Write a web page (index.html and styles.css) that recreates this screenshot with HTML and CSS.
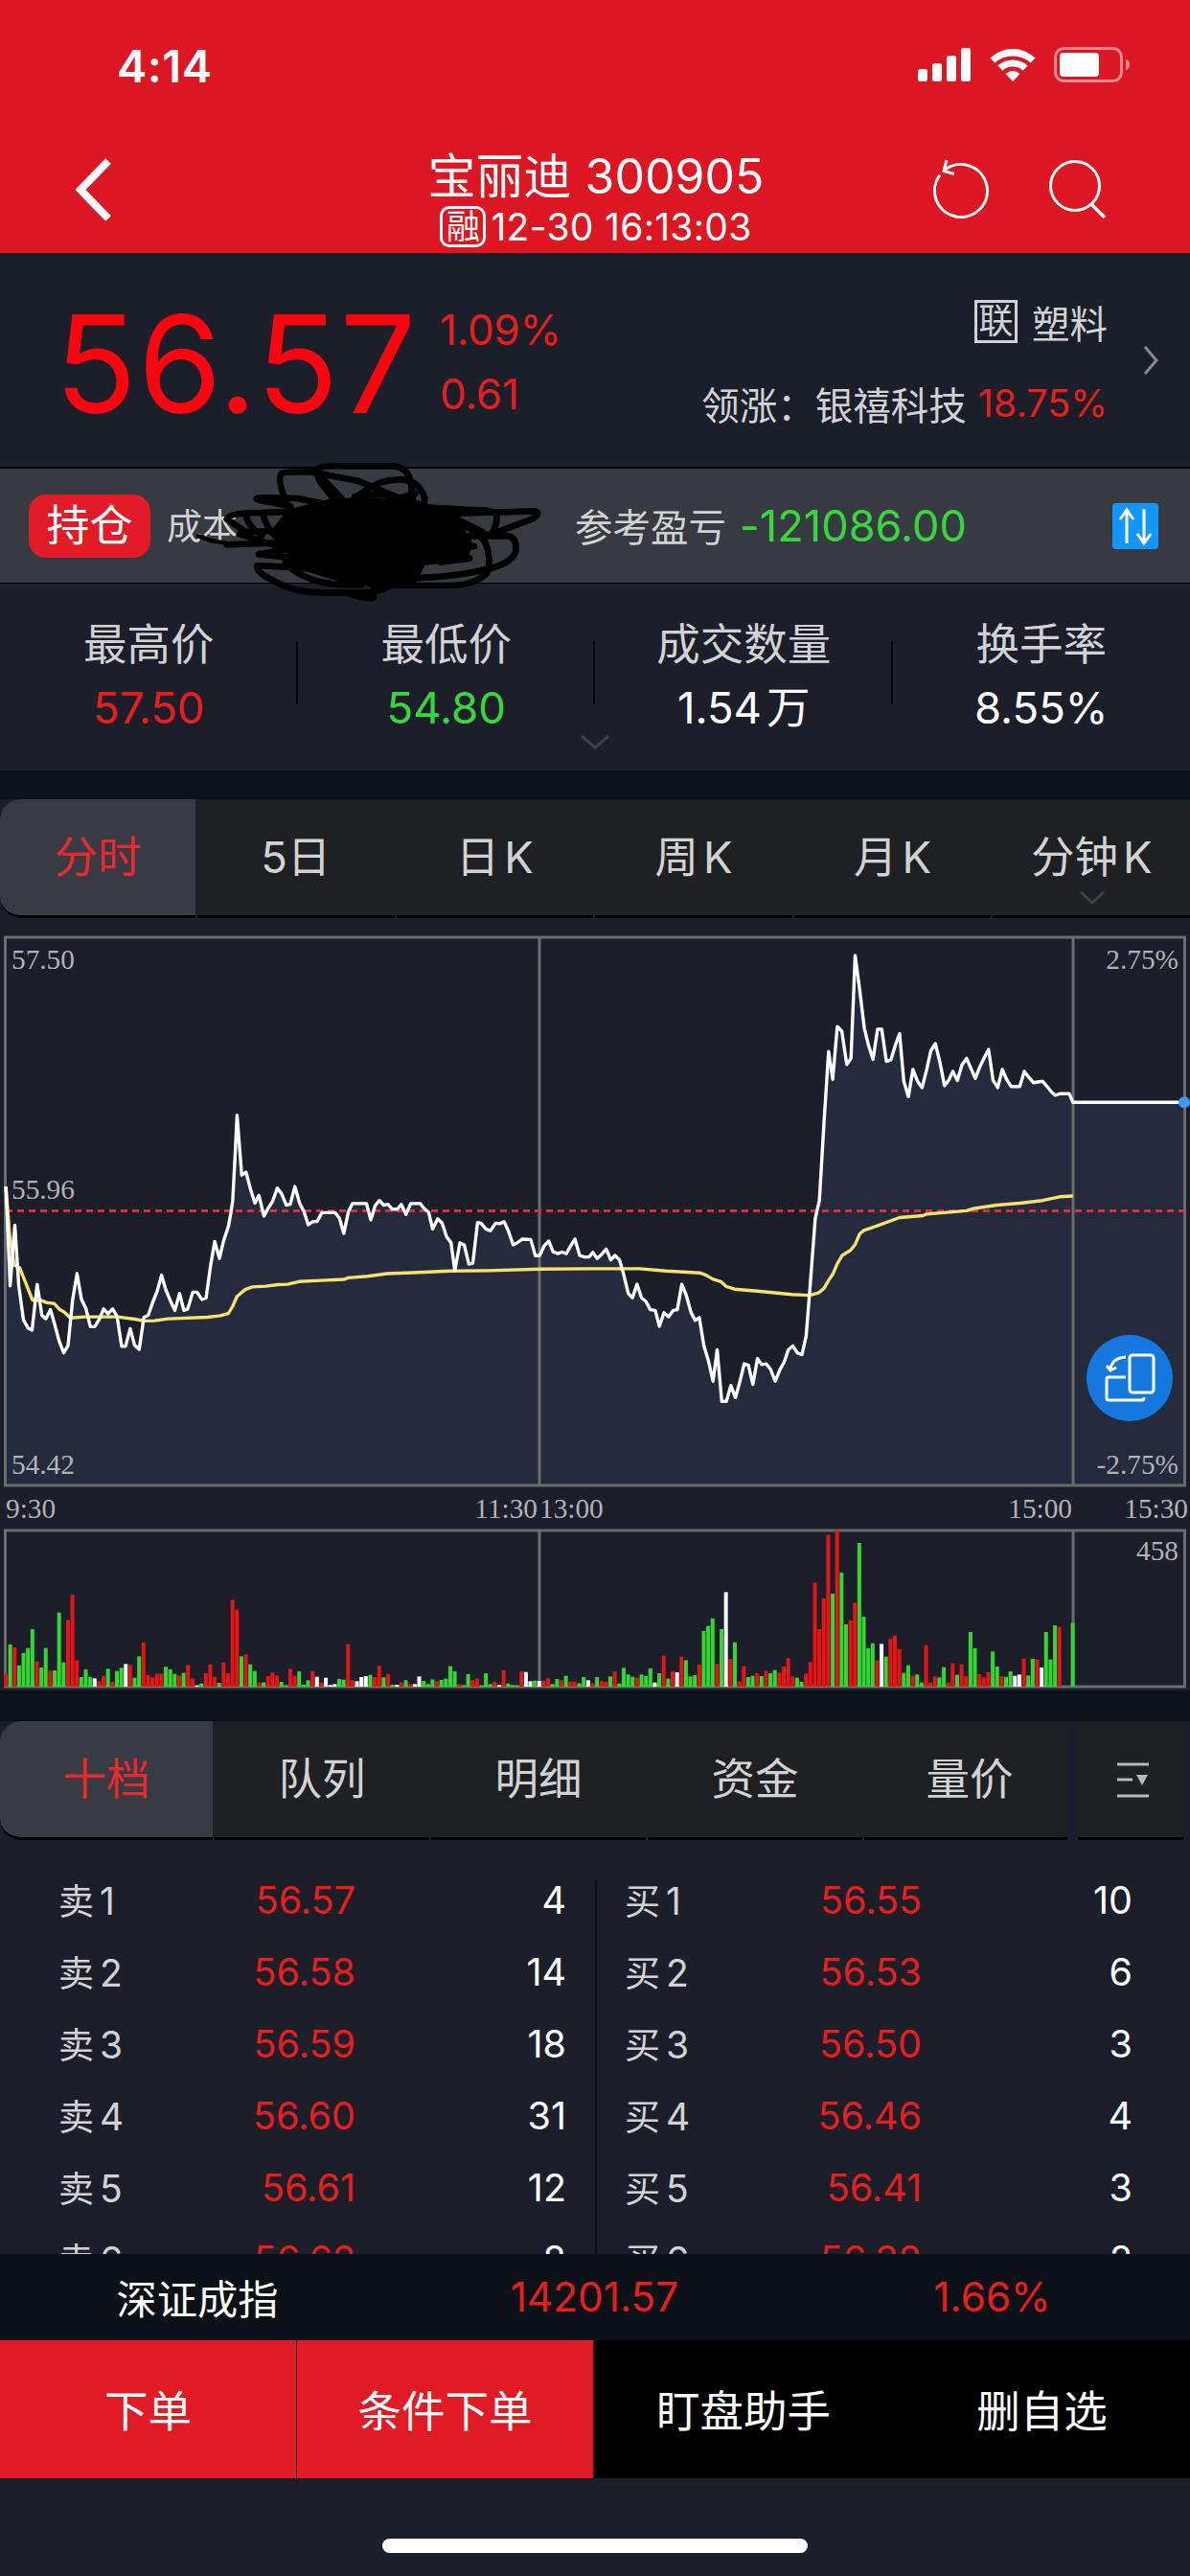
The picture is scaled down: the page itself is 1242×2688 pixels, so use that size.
FILE: index.html
```html
<!DOCTYPE html>
<html lang="zh-CN">
<head>
    <meta charset="UTF-8">
    <meta name="viewport" content="width=device-width, initial-scale=1.0">
    <title>宝丽迪 300905</title>
    <link rel="stylesheet" href="styles.css">
</head>
<body>
    <header class="header">
        <div class="status-bar">
            <span class="clock">4:14</span>
            <div class="status-icons">
                <svg width="56" height="36" viewBox="0 0 56 36" fill="#fff">
                    <rect x="0" y="22" width="10" height="13" rx="2.5"/>
                    <rect x="15" y="16" width="10" height="19" rx="2.5"/>
                    <rect x="30" y="8" width="10" height="27" rx="2.5"/>
                    <rect x="45" y="0" width="10" height="35" rx="2.5"/>
                </svg>
                <svg class="wifi" width="48" height="36" viewBox="0 0 48 36" fill="#fff">
                    <path d="M0.5 10.5 A34 34 0 0 1 47.5 10.5 L42.5 15.8 A27 27 0 0 0 5.5 15.8 Z"/>
                    <path d="M8.3 18.6 A23 23 0 0 1 39.7 18.6 L34.6 23.8 A15.5 15.5 0 0 0 13.4 23.8 Z"/>
                    <path d="M16.5 27 A11 11 0 0 1 31.5 27 L24 35 Z"/>
                </svg>
                <svg width="80" height="38" viewBox="0 0 80 38">
                    <rect x="1.5" y="1.5" width="69" height="34" rx="9" fill="none" stroke="#f48a90" stroke-width="3"/>
                    <rect x="6" y="6" width="41" height="25" rx="4" fill="#fff"/>
                    <path d="M75 12.5 Q79 14.5 79 18.5 Q79 22.5 75 24.5 Z" fill="#f48a90"/>
                </svg>
            </div>
        </div>
        <nav class="nav">
            <svg class="back" width="40" height="66" viewBox="0 0 40 66" fill="none" stroke="#fff" stroke-width="8">
                <path d="M35 3 L6 33 L35 63"/>
            </svg>
            <div class="title">
                <h1>宝丽迪 300905</h1>
                <p><span class="badge">融</span>12-30 16:13:03</p>
            </div>
            <div class="actions">
                <svg width="60" height="64" viewBox="0 0 60 64" fill="none" stroke="#fff" stroke-width="3">
                    <path d="M11 10.4 A27.5 27.5 0 1 1 6 15.5"/>
                    <path d="M13 0 L10 11.5 L21 14.5"/>
                </svg>
                <svg width="60" height="64" viewBox="0 0 60 64" fill="none" stroke="#fff" stroke-width="3">
                    <circle cx="27" cy="27" r="25.5"/>
                    <path d="M44 46 L58 60" stroke-width="3.5"/>
                </svg>
            </div>
        </nav>
    </header>

    <section class="quote">
        <div class="price">56.57</div>
        <div class="change">
            <span>1.09%</span>
            <span>0.61</span>
        </div>
        <div class="sector">
            <div><span class="box">联</span>塑料</div>
            <div>领涨：银禧科技<span class="leader">18.75%</span></div>
        </div>
        <svg class="more" width="17" height="32" viewBox="0 0 17 32" fill="none" stroke="#85888e" stroke-width="3">
            <path d="M2 2 L14 16 L2 30"/>
        </svg>
    </section>

    <section class="position">
        <span class="hold">持仓</span>
        <span class="cost">成本</span>
        <span class="pl-label">参考盈亏</span>
        <span class="pl">-121086.00</span>
        <svg class="swap" width="48" height="48" viewBox="0 0 48 48" fill="none" stroke="#fff" stroke-width="3">
            <rect width="48" height="48" rx="4" fill="#1296fb" stroke="none"/>
            <path d="M15 42 V8 M8 17 L15 7 L22 17"/>
            <path d="M33 6 V40 M26 32 L33 42 L40 32"/>
        </svg>
        <svg class="scribble" width="420" height="170" viewBox="0 0 1260 510">
            <path fill="#000" d="M420 185 L560 150 L690 148 L800 160 L900 190 L960 225 L1000 290 L985 345 L850 360 L820 420 L700 430 L580 410 L400 355 L430 300 L370 250 Z"/>
            <g fill="none" stroke="#000" stroke-width="20" stroke-linecap="round" stroke-linejoin="round">
                <path d="M420 170 Q385 90 402 72 Q412 66 500 68 L640 95 L760 145 L900 190 L1030 255"/>
                <path d="M430 175 L330 155 Q310 148 350 148 L450 150 L600 180 Q680 95 760 92 Q830 85 850 150 L840 200"/>
                <path d="M590 150 L505 62 Q520 47 600 49 H750 Q795 52 805 95 L815 170 L560 160"/>
                <path d="M570 160 L520 95 L510 60 M630 145 Q720 125 800 160 M700 170 L820 135"/>
                <path d="M230 295 L380 290 L470 250 L290 255 L230 215 Q240 195 330 195 L500 190 L700 170 L1010 187 Q1070 185 1075 205 Q1078 230 1060 260"/>
                <path d="M140 268 L180 282 L240 292" stroke-width="13"/>
                <path d="M860 200 L1195 190 Q1215 200 1185 215 L1060 262 L930 275 M1000 268 H1110 Q1138 270 1135 315 Q1125 350 1060 368 Q950 398 800 400"/>
                <path d="M920 220 Q1010 240 1040 290 Q1060 340 1045 385 Q1000 425 920 423 H720"/>
                <path d="M270 262 L420 310 L330 325 L470 340 M290 200 Q295 240 340 265 M345 205 Q360 260 420 300"/>
                <path d="M500 370 L325 360 Q320 380 370 405 Q440 445 520 445 H670 Q750 435 760 400 M420 360 Q500 430 650 420 M620 450 Q680 470 690 460 L690 390"/>
                <path d="M900 350 L990 338 M900 310 L1005 300"/>
            </g>
        </svg>
    </section>

    <section class="stats">
        <div><span>最高价</span><b class="red">57.50</b></div>
        <div><span>最低价</span><b class="green">54.80</b></div>
        <div><span>成交数量</span><b>1.54<i>万</i></b></div>
        <div><span>换手率</span><b>8.55%</b></div>
        <svg class="expand" width="30" height="16" viewBox="0 0 30 16" fill="none" stroke="#3c414b" stroke-width="3">
            <path d="M1 1 L15 13 L29 1"/>
        </svg>
    </section>

    <div class="tabs">
        <span class="active">分时</span>
        <span>5日</span>
        <span>日<i>K</i></span>
        <span>周<i>K</i></span>
        <span>月<i>K</i></span>
        <span>分钟<i>K</i>
            <svg class="tab-arrow" width="26" height="14" viewBox="0 0 26 14" fill="none" stroke="#3c414b" stroke-width="2.5">
                <path d="M1 1 L13 12 L25 1"/>
            </svg>
        </span>
    </div>

    <!-- Price line, average line and volume bars are drawn by chart.js -->
    <section class="chart">
        <svg id="chart" width="1242" height="810" viewBox="0 0 1242 810"></svg>
        <svg class="rotate" width="90" height="90" viewBox="0 0 90 90" fill="none" stroke="#fff" stroke-width="3">
            <circle cx="45" cy="45" r="45" fill="#1478dc" stroke="none"/>
            <rect x="45" y="21" width="25" height="39" rx="3"/>
            <path d="M41 44 H23 Q21 44 21 46 V66 Q21 68 23 68 H58 Q60 68 60 65"/>
            <path d="M41 23 Q27 24 25 35 M21 32 L25 37 L31 34"/>
        </svg>
    </section>

    <div class="tabs book-tabs">
        <span class="active">十档</span>
        <span>队列</span>
        <span>明细</span>
        <span>资金</span>
        <span class="last">量价</span>
        <span class="menu">
            <svg width="34" height="38" viewBox="0 0 34 38" stroke="#b8b8ba" stroke-width="3">
                <path d="M0 3 H33 M0 19 H16 M0 36 H33"/>
                <path d="M20 14 H32 L26 25 Z" fill="#b8b8ba" stroke="none"/>
            </svg>
        </span>
    </div>

    <section class="book">
        <ul>
            <li><span>卖<i>1</i></span><span class="red">56.57</span><span>4</span></li>
            <li><span>卖<i>2</i></span><span class="red">56.58</span><span>14</span></li>
            <li><span>卖<i>3</i></span><span class="red">56.59</span><span>18</span></li>
            <li><span>卖<i>4</i></span><span class="red">56.60</span><span>31</span></li>
            <li><span>卖<i>5</i></span><span class="red">56.61</span><span>12</span></li>
            <li><span>卖<i>6</i></span><span class="red">56.62</span><span>8</span></li>
        </ul>
        <ul>
            <li><span>买<i>1</i></span><span class="red">56.55</span><span>10</span></li>
            <li><span>买<i>2</i></span><span class="red">56.53</span><span>6</span></li>
            <li><span>买<i>3</i></span><span class="red">56.50</span><span>3</span></li>
            <li><span>买<i>4</i></span><span class="red">56.46</span><span>4</span></li>
            <li><span>买<i>5</i></span><span class="red">56.41</span><span>3</span></li>
            <li><span>买<i>6</i></span><span class="red">56.38</span><span>2</span></li>
        </ul>
    </section>

    <div class="index-bar">
        <span>深证成指</span>
        <span class="red">14201.57</span>
        <span class="red">1.66%</span>
    </div>

    <footer class="footer">
        <button class="order">下单</button>
        <button class="order">条件下单</button>
        <button>盯盘助手</button>
        <button>删自选</button>
    </footer>
    <div class="home-area"><div class="home-indicator"></div></div>

    <script src="chart.js"></script>
</body>
</html>
```
FILE: styles.css
```css
* {
    box-sizing: border-box;
}

body {
    margin: 0;
    width: 1242px;
    height: 2688px;
    overflow: hidden;
    background-color: #1c1f2a;
    color: #fff;
    font-family: Inter, "Noto Sans CJK SC", sans-serif;
    display: flex;
    flex-direction: column;
}

h1, p, ul {
    margin: 0;
    padding: 0;
    font-weight: normal;
}

i {
    font-style: normal;
    margin-left: 5px;
}

svg {
    display: block;
    flex: none;
}

.red {
    color: #e61e1e;
}

.green {
    color: #37d73c;
}

/* header */
.header {
    height: 264px;
    background-color: #dc1622;
}

.status-bar {
    height: 136px;
    padding: 0 62px 0 122px;
    display: flex;
    justify-content: space-between;
    align-items: center;
}

.clock {
    font-size: 47px;
    font-weight: 600;
    letter-spacing: 0.5px;
}

.status-icons {
    display: flex;
    align-items: center;
}

.wifi {
    margin: 0 19px 0 19px;
}

.nav {
    height: 128px;
    padding: 0 87px 0 78px;
    display: grid;
    grid-template-columns: 1fr auto 1fr;
    align-items: start;
}

.back {
    margin-top: 29px;
}

.title {
    margin-left: 11px;
    text-align: center;
}

.title h1 {
    margin-top: 18px;
    height: 60px;
    line-height: 60px;
    font-size: 50px;
}

.title p {
    display: flex;
    justify-content: center;
    align-items: center;
    height: 44px;
    font-size: 39px;
    letter-spacing: 0.3px;
}

.badge {
    width: 48px;
    height: 43px;
    margin-right: 5px;
    border: 3px solid #fff;
    border-radius: 10px;
    line-height: 36px;
    font-size: 35px;
    text-align: center;
    letter-spacing: 0;
}

.actions {
    display: flex;
    justify-content: flex-end;
    gap: 60px;
    margin-top: 31px;
}

.actions svg {
    overflow: visible;
}

/* quote */
.quote {
    height: 223px;
    padding: 0 32px 0 57px;
    display: flex;
    align-items: center;
    background-color: #1b1f29;
}

.price {
    width: 402px;
    margin-top: 8px;
    font-size: 141px;
    font-weight: 400;
    line-height: 140px;
    letter-spacing: 1.2px;
    color: #fa0510;
}

.change {
    display: flex;
    flex-direction: column;
    margin-top: 4px;
    font-size: 44px;
    line-height: 67px;
    letter-spacing: -0.2px;
    color: #e61e1e;
}

.sector {
    flex: 1;
    margin: 5px 37px 0 0;
    font-size: 39.5px;
    color: #d2d2d4;
}

.sector > div {
    height: 85px;
    display: flex;
    justify-content: flex-end;
    align-items: center;
}

.box {
    width: 45px;
    height: 45px;
    margin-right: 15px;
    border: 3px solid #d2d2d4;
    line-height: 38px;
    font-size: 36px;
    text-align: center;
}

.leader {
    margin-left: 12px;
    color: #e61e1e;
}

/* position bar */
.position {
    position: relative;
    height: 122px;
    border-top: 2px solid #000;
    border-bottom: 1px solid #000;
    padding: 0 33px 0 30px;
    display: flex;
    align-items: center;
    background-color: #373a41;
    color: #d2d2d4;
    font-size: 39.5px;
}

.hold {
    width: 127px;
    height: 66px;
    border-radius: 18px;
    background-color: #e11b27;
    color: #fff;
    font-size: 45px;
    line-height: 66px;
    text-align: center;
}

.cost {
    width: 426px;
    margin-left: 17px;
    font-size: 37px;
}

.cost,
.pl-label {
    padding-bottom: 3px;
}

.pl {
    margin-left: 14px;
    font-size: 45px;
    letter-spacing: 0.1px;
    color: #37d73c;
}

.swap {
    margin-left: auto;
}

.scribble {
    position: absolute;
    left: 160px;
    top: -19px;
    z-index: 1;
}

/* stats */
.stats {
    position: relative;
    height: 195px;
    display: grid;
    grid-template-columns: repeat(4, 1fr);
}

.stats div {
    display: flex;
    flex-direction: column;
    align-items: center;
    padding-top: 31px;
    font-size: 45.5px;
    line-height: 66px;
    color: #d2d2d4;
    background: linear-gradient(#05060c, #05060c) no-repeat right 60px / 2px 66px;
}

.stats div:nth-child(4) {
    background: none;
}

.stats b {
    font-weight: normal;
    color: #fff;
}

.stats b.red {
    color: #e61e1e;
}

.stats b.green {
    color: #37d73c;
}

.expand {
    position: absolute;
    left: 606px;
    top: 158px;
}

/* tabs */
.tabs {
    height: 150px;
    padding-bottom: 1px;
    border-top: 30px solid #0c1219;
    display: grid;
    grid-template-columns: 204px repeat(5, 1fr);
    gap: 2px;
}

.tabs span {
    position: relative;
    border-bottom: 3px solid #000;
    background-color: #1f2023;
    color: #d2d2d4;
    font-size: 45.5px;
    line-height: 121px;
    text-align: center;
    box-shadow: 2px 0 #1f2023;
}

.tabs .active {
    border-radius: 22px 0 0 22px;
    background-color: #383b42;
    color: #e62a30;
    box-shadow: none;
}

.tab-arrow {
    position: absolute;
    left: 91px;
    top: 96px;
}

/* chart */
.chart {
    position: relative;
    height: 810px;
}

.chart text {
    font-family: "Liberation Serif", serif;
    font-size: 29.3px;
    fill: #b2b2b4;
}

.rotate {
    position: absolute;
    left: 1134px;
    top: 439px;
}

.frame {
    fill: none;
    stroke: #6b6c6f;
    stroke-width: 3;
}

.area {
    fill: #262a3d;
}

.line {
    fill: none;
    stroke-width: 3.4;
    stroke-linejoin: round;
}

/* order book */
.book-tabs {
    grid-template-columns: 222px 224px 224px 224px 212px 119px;
    height: 151px;
    border-top-width: 32px;
}

.book-tabs .last {
    padding-left: 8px;
}

.book-tabs .menu {
    margin-left: 9px;
    display: flex;
    align-items: center;
    padding-left: 41px;
    box-shadow: none;
}

.book {
    height: 437px;
    padding-top: 31px;
    display: grid;
    grid-template-columns: 623px 619px;
    align-items: start;
    overflow: hidden;
}

.book ul {
    list-style: none;
}

.book ul:first-child {
    background: linear-gradient(#0c0f16, #0c0f16) no-repeat right 15px / 2px 100%;
}

.book li {
    height: 75px;
    display: grid;
    grid-template-columns: 120px 1fr 220px;
    padding: 0 32px 0 61px;
    font-size: 39.5px;
    line-height: 75px;
    text-align: right;
}

.book ul:last-child li {
    padding: 0 60px 0 29px;
}

.book li span:first-child {
    font-size: 37px;
    text-align: left;
    color: #d2d2d4;
}

.book li i {
    margin-left: 6px;
    font-size: 39px;
}

/* bottom */
.index-bar {
    height: 90px;
    padding-bottom: 2px;
    display: grid;
    grid-template-columns: 412px 417px 1fr;
    align-items: center;
    text-align: center;
    background-color: #0c1118;
    font-size: 42.3px;
}

.footer {
    height: 144px;
    display: grid;
    grid-template-columns: 309px 309px 312px 1fr;
    gap: 1px;
}

.footer button {
    border: none;
    padding: 0 0 3px;
    background-color: #000;
    box-shadow: 1px 0 #000;
    color: #fff;
    font-family: inherit;
    font-size: 45.5px;
}

.footer .order {
    background-color: #e11b26;
    box-shadow: none;
}

.home-area {
    flex: 1;
    display: flex;
    justify-content: center;
    align-items: flex-end;
    padding-bottom: 24px;
}

.home-indicator {
    width: 444px;
    height: 15px;
    border-radius: 8px;
    background-color: #fff;
}
```
FILE: chart.js
```js
const SVG_NS = 'http://www.w3.org/2000/svg';
const chart = document.getElementById('chart');

// Plot area: one trading minute is 4.64px wide, 240 minutes in a day
const LEFT = 6;
const NOON = 563;
const CLOSE = 1120;
const RIGHT = 1236;
const STEP = 4.64;

const PRICE_TOP = 24;
const PRICE_BOTTOM = 596;
const VOLUME_TOP = 643;
const VOLUME_BOTTOM = 806;

// Points are stored as x,y pairs per half of the chart, each half with its own scale
const price = {
    am: '15,678 26,940 38,780 48,940 60,1030 72,1052 82,1057 95,936 107,1018 117,1027 129,1003 140,1042 152,1088 163,1117 174,1098 186,975 197,908 208,975 220,1001 231,1048 242,1048 254,1028 265,1001 276,1014 288,1001 299,1020 311,1100 321,1100 333,1053 344,1096 356,1108 368,1023 379,1018 390,985 402,954 413,912 424,951 435,978 447,1005 459,960 470,1005 480,1001 493,957 504,957 516,976 527,972 538,890 549,823 561,868 572,820 584,783 590,750 595,715 601,600 606,490 618,648 629,640 640,683 652,722 662,701 675,756 686,735 697,717 709,682 720,697 732,727 742,725 754,678 766,722 777,744 788,779 799,771 811,770 823,747 857,747 868,762 879,802 891,744 901,723 937,723 948,766 959,729 970,715 981,727 992,725 1003,738 1016,738 1026,725 1038,752 1050,723 1075,723 1085,737 1096,746 1106,790 1119,763 1130,774 1142,811 1153,826 1163,900 1176,827 1187,832 1199,883 1209,880 1221,773 1230,775 1242,790 1254,795 1267,775 1277,776 1289,771 1300,796 1312,832 1322,827 1335,817 1357,818 1369,861 1380,860 1391,835 1403,822 1414,850 1426,855 1437,851 1448,855 1459,835 1470,817 1482,860 1494,864 1506,864 1516,852',
    pm: '8,868 20,857 32,843 44,872 55,860 67,872 78,910 90,960 101,972 113,936 125,972 137,982 148,1003 161,1005 172,1047 184,1011 196,1022 208,1005 219,1003 231,936 243,966 255,1010 266,1031 277,1024 289,1098 301,1138 313,1192 324,1109 336,1245 348,1245 360,1203 372,1235 384,1192 395,1146 406,1150 418,1200 430,1132 441,1148 453,1146 464,1160 477,1192 489,1161 500,1142 511,1109 523,1099 535,1117 547,1122 558,1072 567,960 582,762 593,715 605,510 617,322 628,395 640,256 652,268 665,356 676,340 687,68 699,160 711,260 722,305 734,343 746,263 757,263 769,348 781,344 793,304 804,275 815,400 827,441 839,369 851,400 863,417 875,370 886,320 898,301 910,350 922,412 933,398 944,374 956,398 968,357 980,340 992,367 1003,393 1015,362 1027,338 1038,316 1050,398 1062,417 1074,369 1085,394 1097,414 1120,414 1132,374 1144,390 1156,404 1180,400 1191,413 1203,428 1213,437 1227,433 1250,433 1260,456 1552,456'
};

const average = {
    am: '15,678 24,800 36,885 50,892 83,978 105,978 118,984 139,987 152,1002 164,1009 180,1025 215,1022 300,1022 345,1028 368,1033 395,1032 430,1027 530,1023 563,1019 584,1013 595,994 606,968 627,950 645,943 680,941 710,937 735,936 765,929 820,926 880,923 890,919 940,915 990,908 1070,905 1150,901 1250,900 1380,896 1510,895',
    pm: '0,895 120,895 190,901 278,906 295,912 312,922 335,930 348,942 370,949 430,954 520,963 567,965 590,959 605,947 617,926 628,910 640,882 653,860 675,846 687,831 699,803 710,794 745,782 804,760 865,755 875,751 980,742 1000,736 1060,727 1120,722 1180,715 1225,705 1260,703'
};

// One entry per minute: colour letter and bar height
const volume = 'r40 g132 r123 g66 g105 g121 g180 r79 g60 g121 r49 g51 g232 g76 r209 r288 r82 g30 g54 g31 w26 r17 r34 g56 r15 g49 g59 w71 r68 g28 g95 r138 r36 r29 r41 r41 g62 g54 g40 r35 g43 r68 r25 w4 g10 r42 r70 r31 g12 r75 r42 r272 r241 g95 r101 g70 g49 r13 g13 r33 r44 r35 g15 g4 r56 r34 g48 g6 g20 r49 w31 r13 w28 w5 w8 g24 g22 r133 r20 w17 w30 w33 g37 r30 r65 g29 r40 g6 w6 r13 g20 r8 w8 w32 g18 g8 g23 r17 g21 g25 g64 g48 r8 g4 g39 r20 r25 g4 g42 g8 r15 w5 r51 g10 g5 g4 r48 w46 w17 g19 w18 r18 r26 g8 g24 r20 g34 r16 r16 g11 g30 w20 r11 g30 r18 r16 g32 ' +
    'r48 g10 g59 g38 g31 r28 g38 g33 g57 w13 g42 r97 g25 r48 w45 r94 g83 g32 g36 r69 g174 g190 g214 r71 g180 w296 r87 g139 r16 r64 g30 g34 r42 g33 r50 g42 g52 r44 r63 r89 r32 g28 g15 r41 r77 r326 r180 r276 r475 g291 r490 g357 g195 r207 r263 g450 g219 g120 g136 r82 w134 g94 r149 r160 r118 g43 g67 r34 g38 g13 r130 r12 r32 g29 g61 r13 r73 g37 r70 r33 g171 g120 r39 r29 r45 g110 g63 r33 g31 g48 w34 w38 r88 g35 g87 r85 w60 g171 g85 g192 r187 w0 w0 g200';

const barColors = { r: '#e61414', g: '#32d732', w: '#ffffff' };

function draw(name, attrs, text) {
    const el = document.createElementNS(SVG_NS, name);
    for (const [key, value] of Object.entries(attrs)) {
        el.setAttribute(key, value);
    }
    if (text) el.textContent = text;
    chart.appendChild(el);
}

function scale(points, offset, sx) {
    return points.split(' ').map(pair => {
        const [x, y] = pair.split(',').map(Number);
        return (offset + x * sx).toFixed(1) + ',' + (y * 0.3954 + 16).toFixed(1);
    });
}

function toPoints(series) {
    return scale(series.am, 0, 0.4082).concat(scale(series.pm, 620, 0.3967)).join(' ');
}

function drawFrame(top, bottom) {
    draw('path', {
        class: 'frame',
        d: `M${LEFT - 0.5} ${top} H${RIGHT + 0.5} V${bottom} H${LEFT - 0.5} Z M${NOON} ${top} V${bottom} M${CLOSE} ${top} V${bottom}`
    });
}

const pricePoints = toPoints(price);
draw('polygon', { class: 'area', points: `${LEFT},${PRICE_BOTTOM} ${pricePoints} ${RIGHT},${PRICE_BOTTOM}` });
drawFrame(PRICE_TOP, PRICE_BOTTOM);
draw('path', { d: `M${LEFT} 309.5 H${RIGHT}`, stroke: '#d2303a', 'stroke-width': 3, 'stroke-dasharray': '7 5' });
draw('polyline', { class: 'line', stroke: '#f5e271', points: toPoints(average) });
draw('polyline', { class: 'line', stroke: '#ffffff', points: pricePoints });
draw('circle', { cx: RIGHT, cy: 196.3, r: 6, fill: '#3c96ff' });

// Volume
drawFrame(VOLUME_TOP, VOLUME_BOTTOM);
volume.split(' ').forEach((item, i) => {
    const height = Number(item.slice(1)) / 3;
    if (!height) return;
    draw('rect', { x: LEFT + i * STEP - 2, y: VOLUME_BOTTOM - height, width: 4, height, fill: barColors[item[0]] });
});

// Labels
const labels = [
    [12, 57, 'start', '57.50'],
    [12, 297, 'start', '55.96'],
    [12, 584, 'start', '54.42'],
    [1230, 57, 'end', '2.75%'],
    [1230, 584, 'end', '-2.75%'],
    [6, 630, 'start', '9:30'],
    [NOON - 2, 630, 'end', '11:30'],
    [NOON, 630, 'start', '13:00'],
    [CLOSE - 1, 630, 'end', '15:00'],
    [1240, 630, 'end', '15:30'],
    [1230, 674, 'end', '458']
];
labels.forEach(([x, y, anchor, text]) => draw('text', { x, y, 'text-anchor': anchor }, text));
```
